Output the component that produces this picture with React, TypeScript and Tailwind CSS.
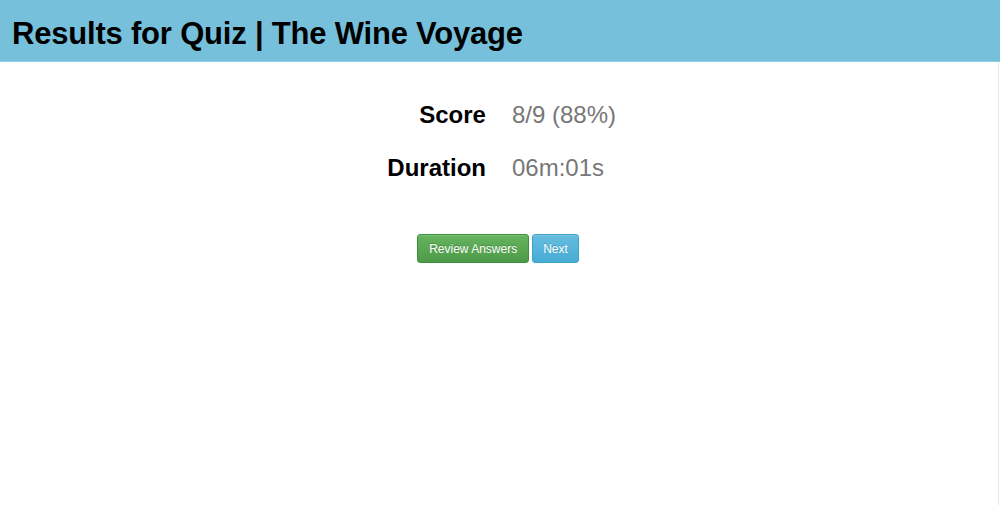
import React from "react";

const rows = [
  { label: "Score", value: "8/9 (88%)" },
  { label: "Duration", value: "06m:01s" },
];

export default function App() {
  return (
    <div className="min-h-[505px] bg-white font-['Liberation_Sans',Arial,sans-serif] text-black">
      <div className="h-[62px] bg-[#77c0dc] border-b border-[#8ccbe3] px-[12px] flex items-center">
        <h1 className="text-[31px] font-bold leading-none tracking-[-0.2px] pt-[5px]">Results for Quiz | The Wine Voyage</h1>
      </div>
      <div className="flex">
        <div className="flex-1 flex flex-col items-center pt-[39px]">
          <div className="flex flex-col gap-[25px] ml-[4px]">
            {rows.map(row => (
              <div key={row.label} className="flex items-baseline text-[24px] leading-[28px]">
                <div className="w-[486px] -ml-[386px] text-right font-bold">{row.label}</div>
                <div className="pl-[26px] text-[#777777]">{row.value}</div>
              </div>
            ))}
          </div>
          <div className="flex gap-[3px] mt-[52px] text-[12px] text-white -ml-[2px]">
            <button className="h-[29px] px-[11px] rounded-[3px] border border-[#3e8f3e] bg-gradient-to-b from-[#65b45e] to-[#4d9a48] [text-shadow:0_-1px_0_rgba(0,0,0,0.2)] shadow-[inset_0_1px_0_rgba(255,255,255,0.15)]">Review Answers</button>
            <button className="h-[29px] px-[10px] rounded-[3px] border border-[#3ea6c8] bg-gradient-to-b from-[#66bde0] to-[#45acd4] [text-shadow:0_-1px_0_rgba(0,0,0,0.2)] shadow-[inset_0_1px_0_rgba(255,255,255,0.15)]">Next</button>
          </div>
        </div>
        <div className="w-[2px] h-[443px] border-l border-[#e6e6e6]" />
      </div>
    </div>
  );
}
